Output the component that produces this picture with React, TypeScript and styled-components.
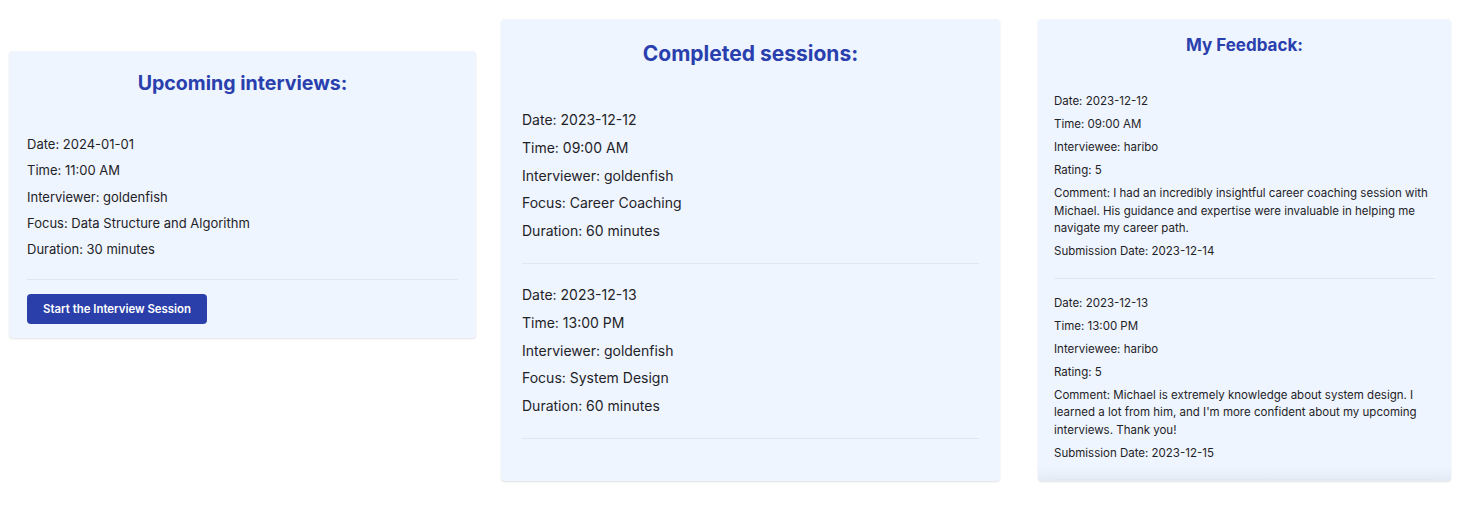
import React from "react";
import styled, { createGlobalStyle } from "styled-components";

const GlobalStyle = createGlobalStyle`
  html, body { margin: 0; padding: 0; background: #ffffff; }
  body { font-family: Inter, "Noto Sans", "Liberation Sans", sans-serif; color: #1f2328; }
  * { box-sizing: border-box; }
`;

const Page = styled.div`
  display: flex;
  align-items: flex-start;
  padding: 19px 0 0 9px;
  width: 1474px;
  height: 520px;
`;

const Card = styled.section<{ $w: number; $mt?: number; $ml?: number; $h?: number; $px: number; $pt: number; $pb: number }>`
  position: relative;
  width: ${(p) => p.$w}px;
  margin-top: ${(p) => p.$mt ?? 0}px;
  margin-left: ${(p) => p.$ml ?? 0}px;
  ${(p) => (p.$h ? `height: ${p.$h}px; overflow: hidden;` : "")}
  padding: ${(p) => p.$pt}px ${(p) => p.$px}px ${(p) => p.$pb}px;
  background: #eef5fe;
  border-radius: 4px;
  box-shadow: 0 1px 2px rgba(0, 0, 0, 0.12);
  display: flex;
  flex-direction: column;
`;

const Fade = styled.div`
  position: absolute;
  left: 0;
  right: 0;
  bottom: 0;
  height: 14px;
  background: linear-gradient(to bottom, rgba(226, 233, 244, 0), rgba(226, 233, 244, 0.9));
  pointer-events: none;
`;

const Title = styled.h2<{ $size: number; $lh: number; $mb: number }>`
  margin: 0 0 ${(p) => p.$mb}px;
  text-align: center;
  font-size: ${(p) => p.$size}px;
  line-height: ${(p) => p.$lh}px;
  font-weight: 700;
  color: #2a3fae;
`;

const Entry = styled.div<{ $gap: number }>`
  display: flex;
  flex-direction: column;
  gap: ${(p) => p.$gap}px;
`;

const Line = styled.p<{ $size: number; $lh: number }>`
  margin: 0;
  font-size: ${(p) => p.$size}px;
  line-height: ${(p) => p.$lh}px;
  color: #1f2328;
`;

const Divider = styled.hr<{ $above: number; $below: number }>`
  border: none;
  border-top: 1px solid #dfe6ef;
  margin: ${(p) => p.$above}px 0 ${(p) => p.$below}px;
`;

const Button = styled.button`
  align-self: flex-start;
  width: 180px;
  height: 30px;
  border: none;
  border-radius: 4px;
  background: #2a3fa9;
  color: #ffffff;
  font-family: Inter, "Noto Sans", "Liberation Sans", sans-serif;
  font-size: 11.4px;
  font-weight: 600;
  cursor: pointer;
`;

const upcoming = [
  ["Date: 2024-01-01", "Time: 11:00 AM", "Interviewer: goldenfish", "Focus: Data Structure and Algorithm", "Duration: 30 minutes"],
];

const completed = [
  ["Date: 2023-12-12", "Time: 09:00 AM", "Interviewer: goldenfish", "Focus: Career Coaching", "Duration: 60 minutes"],
  ["Date: 2023-12-13", "Time: 13:00 PM", "Interviewer: goldenfish", "Focus: System Design", "Duration: 60 minutes"],
];

const feedback = [
  [
    "Date: 2023-12-12",
    "Time: 09:00 AM",
    "Interviewee: haribo",
    "Rating: 5",
    "Comment: I had an incredibly insightful career coaching session with Michael. His guidance and expertise were invaluable in helping me navigate my career path.",
    "Submission Date: 2023-12-14",
  ],
  [
    "Date: 2023-12-13",
    "Time: 13:00 PM",
    "Interviewee: haribo",
    "Rating: 5",
    "Comment: Michael is extremely knowledge about system design. I learned a lot from him, and I'm more confident about my upcoming interviews. Thank you!",
    "Submission Date: 2023-12-15",
  ],
];

export default function App() {
  return (
    <>
      <GlobalStyle />
      <Page>
        <Card $w={467} $mt={32} $px={18} $pt={18} $pb={14}>
          <Title $size={19.6} $lh={28} $mb={37}>Upcoming interviews:</Title>
          {upcoming.map((e, i) => (
            <React.Fragment key={i}>
              <Entry $gap={6.25}>
                {e.map((t) => (
                  <Line key={t} $size={13} $lh={20}>{t}</Line>
                ))}
              </Entry>
              <Divider $above={20} $below={14} />
            </React.Fragment>
          ))}
          <Button>Start the Interview Session</Button>
        </Card>

        <Card $w={499} $ml={25} $px={21} $pt={20} $pb={22}>
          <Title $size={21} $lh={30} $mb={40}>Completed sessions:</Title>
          {completed.map((e, i) => (
            <React.Fragment key={i}>
              <Entry $gap={5.75}>
                {e.map((t) => (
                  <Line key={t} $size={14} $lh={22}>{t}</Line>
                ))}
              </Entry>
              <Divider $above={21} $below={20} />
            </React.Fragment>
          ))}
        </Card>

        <Card $w={413} $ml={38} $h={462} $px={16} $pt={14} $pb={0}>
          <Title $size={17} $lh={24} $mb={36}>My Feedback:</Title>
          {feedback.map((e, i) => (
            <React.Fragment key={i}>
              <Entry $gap={5.5}>
                {e.map((t) => (
                  <Line key={t} $size={11.5} $lh={17.5}>{t}</Line>
                ))}
              </Entry>
              <Divider $above={17} $below={16} />
            </React.Fragment>
          ))}
          <Fade />
        </Card>
      </Page>
    </>
  );
}
